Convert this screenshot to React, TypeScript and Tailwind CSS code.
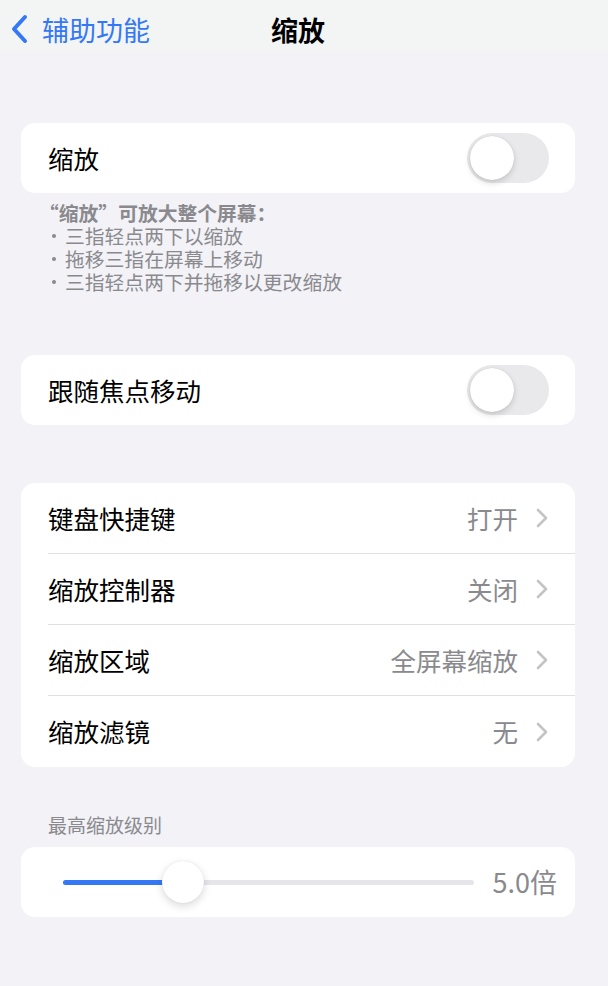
import React from 'react';

const font = { fontFamily: '"Noto Sans CJK SC", "Noto Sans", sans-serif' };

function Toggle() {
  return (
    <div className="relative w-[82px] h-[50px] rounded-full bg-[#e9e9eb]">
      <div className="absolute left-[3px] top-[3px] w-[44px] h-[44px] rounded-full bg-white shadow-[0_3px_6px_rgba(0,0,0,0.15),0_0_1px_rgba(0,0,0,0.2)]" />
    </div>
  );
}

function Chevron() {
  return (
    <svg width="12" height="20" viewBox="0 0 12 20" fill="none">
      <path d="M2 2l8 8-8 8" stroke="#c4c4c7" strokeWidth="2.6" strokeLinecap="round" strokeLinejoin="round" />
    </svg>
  );
}

function Bullet({ children }: { children: React.ReactNode }) {
  return (
    <div className="flex items-center h-[23px]">
      <span className="w-[4px] h-[4px] rounded-full bg-[#8a8a8e] ml-[4px] mr-[9px]" />
      <span className="leading-none">{children}</span>
    </div>
  );
}

const rows = [
  { label: '键盘快捷键', value: '打开' },
  { label: '缩放控制器', value: '关闭' },
  { label: '缩放区域', value: '全屏幕缩放' },
  { label: '缩放滤镜', value: '无' },
];

export default function App() {
  return (
    <div className="w-[608px] h-[986px] bg-[#f2f2f7] overflow-hidden" style={font}>
      {/* Nav bar */}
      <div className="relative h-[50px] flex items-center bg-[#f3f4f4]">
        <div className="flex items-center pl-[10px] pt-[8px] gap-[14px]">
          <svg width="18" height="30" viewBox="0 0 18 30" fill="none">
            <path d="M15 3L4 15l11 12" stroke="#3478f6" strokeWidth="4" strokeLinecap="round" strokeLinejoin="round" />
          </svg>
          <span className="text-[27px] text-[#3478f6] leading-none">辅助功能</span>
        </div>
        <div className="absolute left-0 right-[12px] top-[8px] h-[42px] flex items-center justify-center pointer-events-none">
          <span className="text-[27px] font-semibold text-black leading-none">缩放</span>
        </div>
      </div>

      <div className="pl-[21px] pr-[33px] pt-[73px]">
        {/* Zoom toggle */}
        <div className="bg-white rounded-[14px] h-[70px] flex items-center justify-between pl-[27px] pr-[26px]">
          <span className="text-[25.5px] text-black">缩放</span>
          <Toggle />
        </div>
        <div className="pl-[27px] pt-[8px] text-[19.8px] text-[#8a8a8e]">
          <div className="h-[23px] flex items-center -ml-[9px] font-semibold">
            <span className="leading-none">“缩放”可放大整个屏幕：</span>
          </div>
          <Bullet>三指轻点两下以缩放</Bullet>
          <Bullet>拖移三指在屏幕上移动</Bullet>
          <Bullet>三指轻点两下并拖移以更改缩放</Bullet>
        </div>

        {/* Focus follow */}
        <div className="mt-[62px] bg-white rounded-[14px] h-[70px] flex items-center justify-between pl-[27px] pr-[26px]">
          <span className="text-[25.5px] text-black">跟随焦点移动</span>
          <Toggle />
        </div>

        {/* List */}
        <div className="mt-[58px] bg-white rounded-[14px] overflow-hidden">
          {rows.map((r, i) => (
            <div key={r.label} className="pl-[27px]">
              <div className={`h-[71px] flex items-center justify-between pr-[27px] ${i < rows.length - 1 ? 'border-b border-[#e0e0e4]' : ''}`}>
                <span className="text-[25.5px] text-black">{r.label}</span>
                <div className="flex items-center gap-[18px]">
                  <span className="text-[25.5px] text-[#8a8a8e]">{r.value}</span>
                  <Chevron />
                </div>
              </div>
            </div>
          ))}
        </div>

        {/* Max zoom level */}
        <div className="pl-[27px] pt-[46px] pb-[10px] text-[19px] leading-[24px] text-[#8a8a8e]">最高缩放级别</div>
        <div className="bg-white rounded-[14px] h-[70px] flex items-center pl-[42px] pr-[18px]">
          <div className="relative flex-1 h-[5px] rounded-full bg-[#e5e5ea]">
            <div className="absolute left-0 top-0 h-[5px] w-[120px] rounded-full bg-[#3478f6]" />
            <div className="absolute left-[99px] top-[-19px] w-[42px] h-[42px] rounded-full bg-white shadow-[0_3px_8px_rgba(0,0,0,0.15),0_0_1px_rgba(0,0,0,0.15)]" />
          </div>
          <span className="ml-[19px] text-[27px] text-[#8a8a8e]">5.0倍</span>
        </div>
      </div>
    </div>
  );
}
